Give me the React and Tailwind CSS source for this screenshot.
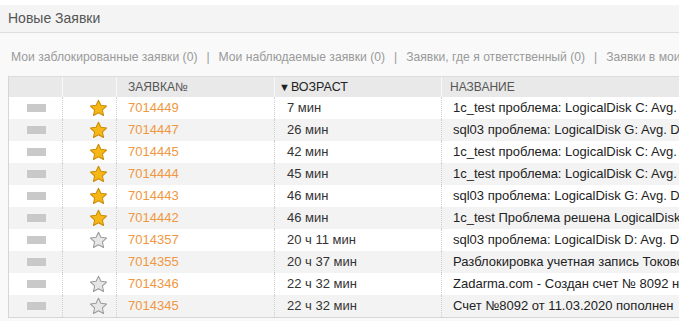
import React from "react";

const rows = [
  { id: "7014449", star: "gold", age: "7 мин", title: "1c_test проблема: LogicalDisk C: Avg. Disk sec/Read" },
  { id: "7014447", star: "gold", age: "26 мин", title: "sql03 проблема: LogicalDisk G: Avg. Disk sec/Read" },
  { id: "7014445", star: "gold", age: "42 мин", title: "1c_test проблема: LogicalDisk C: Avg. Disk sec/Read" },
  { id: "7014444", star: "gold", age: "45 мин", title: "1c_test проблема: LogicalDisk C: Avg. Disk sec/Read" },
  { id: "7014443", star: "gold", age: "46 мин", title: "sql03 проблема: LogicalDisk G: Avg. Disk sec/Read" },
  { id: "7014442", star: "gold", age: "46 мин", title: "1c_test Проблема решена LogicalDisk C: Avg." },
  { id: "7014357", star: "gray", age: "20 ч 11 мин", title: "sql03 проблема: LogicalDisk D: Avg. Disk sec/Read" },
  { id: "7014355", star: null, age: "20 ч 37 мин", title: "Разблокировка учетная запись Токовой" },
  { id: "7014346", star: "gray", age: "22 ч 32 мин", title: "Zadarma.com - Создан счет № 8092 на сумму" },
  { id: "7014345", star: "gray", age: "22 ч 32 мин", title: "Счет №8092 от 11.03.2020 пополнен" },
];

function Star({ type }) {
  if (!type) return null;
  const fill = type === "gold" ? "#f6b716" : "#e6e6e6";
  const stroke = type === "gold" ? "#c98c08" : "#9a9a9a";
  return (
    <svg width="19" height="18" viewBox="0 0 24 23" className="block">
      <path
        d="M12 1.5l3.1 6.6 7.2.9-5.3 5 1.4 7.1L12 17.6l-6.4 3.5L7 14 1.7 9l7.2-.9z"
        fill={fill}
        stroke={stroke}
        strokeWidth="1.3"
        strokeLinejoin="round"
      />
    </svg>
  );
}

export default function App() {
  return (
    <div
      className="w-[679px] h-[321px] overflow-hidden bg-white"
      style={{ fontFamily: '"Liberation Sans", Arial, sans-serif' }}
    >
      <div className="h-[5px] bg-white" />
      <div className="h-[28px] bg-[#f4f4f4] border-b border-[#dedede] pl-[8px] flex items-center text-[14px] text-[#555]">
        Новые Заявки
      </div>
      <div className="bg-[#f9f9f9] h-[288px] pl-[8px]">
        <div className="h-[43px] pt-[15px] pl-[3px] text-[12.15px] text-[#9a9a9a] whitespace-nowrap flex items-start">
          <span>Мои заблокированные заявки (0)</span>
          <span className="px-[9px]">|</span>
          <span>Мои наблюдаемые заявки (0)</span>
          <span className="px-[9px]">|</span>
          <span>Заявки, где я ответственный (0)</span>
          <span className="px-[9px]">|</span>
          <span>Заявки в моих группах (0)</span>
        </div>
        <div className="border-l border-b border-[#d6d6d6] w-[700px]">
          <div className="flex h-[21px] bg-[#e9e9e9] border-t border-[#dcdcdc] text-[12px] text-[#555] items-center">
            <div className="w-[54px] h-full border-r border-[#f8f8f8]" />
            <div className="w-[54px] h-full border-r border-[#f8f8f8]" />
            <div className="w-[158px] h-full border-r border-[#f8f8f8] pl-[11px] flex items-center">ЗАЯВКА№</div>
            <div className="w-[167px] h-full border-r border-[#f8f8f8] pl-[4px] flex items-center text-[#222] text-[12.5px]">
              <span className="text-[11px] mr-[1px]">▼</span>ВОЗРАСТ
            </div>
            <div className="flex-1 h-full pl-[8px] flex items-center">НАЗВАНИЕ</div>
          </div>
          {rows.map((r, i) => (
            <div
              key={r.id}
              className={`flex h-[22px] text-[13px] items-center ${i % 2 === 0 ? "bg-white" : "bg-[#f3f3f3]"}`}
            >
              <div className="w-[54px] h-full border-r border-dotted border-[#cfcfcf] flex items-center pl-[18px]">
                <div className="w-[19px] h-[8px] bg-[#c9c9c9]" />
              </div>
              <div className="w-[54px] h-full border-r border-dotted border-[#cfcfcf] flex items-center justify-end pr-[8px]">
                <Star type={r.star} />
              </div>
              <div className="w-[158px] h-full border-r border-dotted border-[#cfcfcf] pl-[11px] flex items-center text-[#f0973f]">
                {r.id}
              </div>
              <div className="w-[167px] h-full border-r border-dotted border-[#cfcfcf] pl-[12px] flex items-center text-[#333] whitespace-nowrap">
                {r.age}
              </div>
              <div className="flex-1 h-full pl-[11px] flex items-center text-[#222] whitespace-nowrap overflow-hidden">
                {r.title}
              </div>
            </div>
          ))}
        </div>
      </div>
    </div>
  );
}
